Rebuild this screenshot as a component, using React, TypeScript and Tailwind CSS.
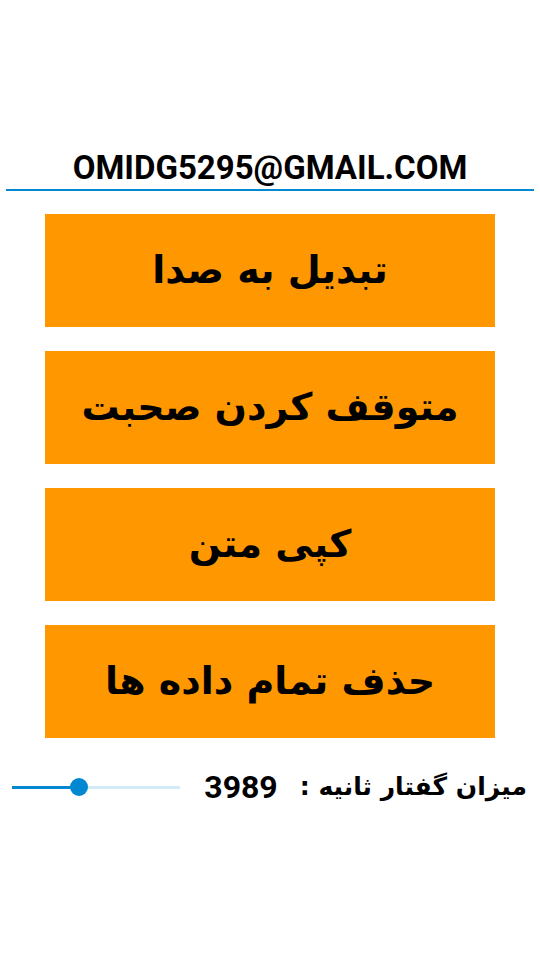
export default function App() {
  const buttons = ['تبدیل به صدا', 'متوقف کردن صحبت', 'کپی متن', 'حذف تمام داده ها'];

  return (
    <div className="w-[540px] h-[960px] bg-white flex flex-col">
      {/* Email header */}
      <div className="pt-[149px] px-[6px]">
        <div className="text-center font-['Roboto',sans-serif] font-bold text-[33px] leading-[38px] text-black">
          OMIDG5295@GMAIL.COM
        </div>
        <div className="h-[2px] bg-[#0288d1] mt-[2px]" />
      </div>

      {/* Action buttons */}
      <div className="flex flex-col gap-[24px] px-[45px] pt-[23px]">
        {buttons.map((label) => (
          <button
            key={label}
            dir="rtl"
            className="h-[113px] bg-[#ff9700] text-black font-['DejaVu_Sans',sans-serif] font-bold text-[38px] flex items-center justify-center"
          >
            {label}
          </button>
        ))}
      </div>

      {/* Speech rate row */}
      <div className="flex items-center px-[12px] pt-[25px]">
        <div className="relative w-[168px] h-[20px] flex items-center">
          <div className="h-[3px] w-full bg-[#d3eaf7]" />
          <div className="absolute left-0 h-[3px] w-[67px] bg-[#0288d1]" />
          <div className="absolute left-[58px] w-[18px] h-[18px] rounded-full bg-[#0288d1]" />
        </div>
        <div dir="rtl" className="flex-1 flex items-center pr-[1px] text-black font-bold">
          <span className="font-['DejaVu_Sans',sans-serif] text-[25px]">میزان گفتار ثانیه :</span>
          <span className="font-['Roboto',sans-serif] text-[32px] mr-[22px]" dir="ltr">3989</span>
        </div>
      </div>
    </div>
  );
}
